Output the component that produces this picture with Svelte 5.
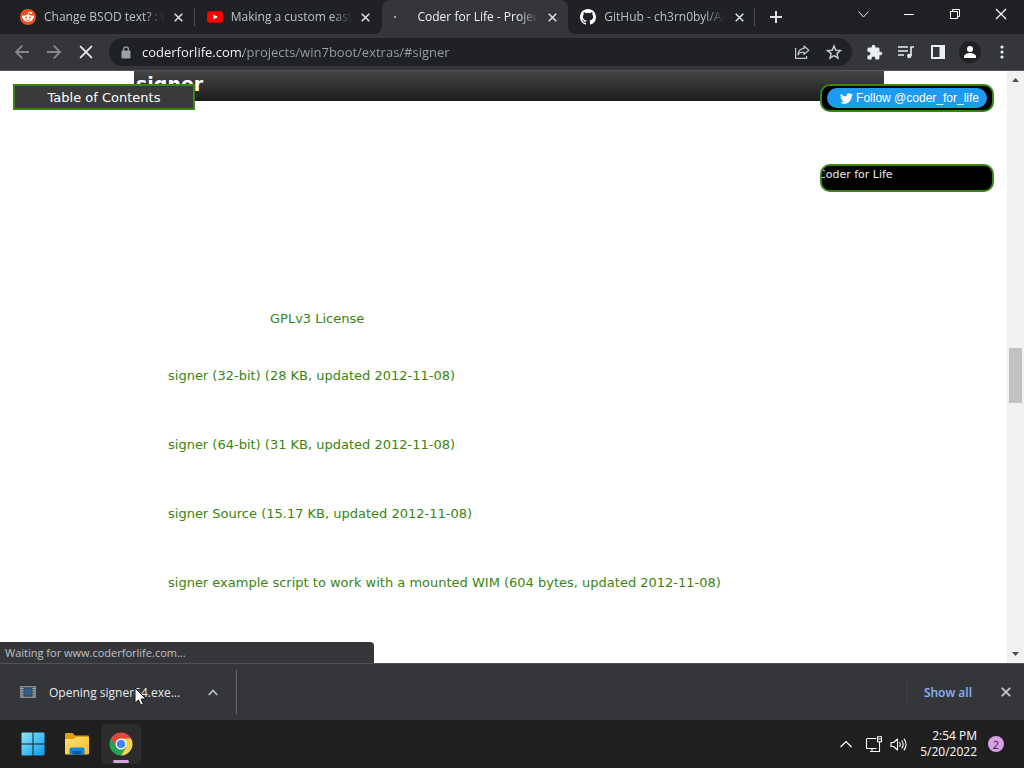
<script>
  const tabs = [
    { title: 'Change BSOD text? : wi', icon: 'reddit' },
    { title: 'Making a custom easter', icon: 'youtube' },
    { title: 'Coder for Life - Projects', icon: 'loading', active: true },
    { title: 'GitHub - ch3rn0byl/Ang', icon: 'github' },
  ];
  const downloads = [
    'signer (32-bit) (28 KB, updated 2012-11-08)',
    'signer (64-bit) (31 KB, updated 2012-11-08)',
    'signer Source (15.17 KB, updated 2012-11-08)',
    'signer example script to work with a mounted WIM (604 bytes, updated 2012-11-08)',
  ];
</script>

{#snippet cross(size, weight)}
  <svg width={size} height={size} viewBox="0 0 10 10" fill="none" stroke="currentColor" stroke-width={weight} aria-hidden="true">
    <path d="M.8.8l8.4 8.4M9.2.8L.8 9.2" />
  </svg>
{/snippet}

<div class="desktop">
  <header class="tabstrip">
    <div class="tabs">
      {#each tabs as tab}
        <div class="tab" class:active={tab.active}>
          <span class="favicon">
            {#if tab.icon === 'reddit'}
              <svg width="16" height="16" viewBox="0 0 16 16">
                <circle cx="8" cy="8" r="8" fill="#f4501c" />
                <path d="M8 6.3l.8-3 2.2.5" fill="none" stroke="#fff" stroke-width=".9" />
                <circle cx="11.3" cy="3.9" r="1" fill="#fff" />
                <circle cx="3.3" cy="7.9" r="1.4" fill="#fff" />
                <circle cx="12.7" cy="7.9" r="1.4" fill="#fff" />
                <ellipse cx="8" cy="9.3" rx="4.9" ry="3.6" fill="#fff" />
                <circle cx="6.1" cy="8.6" r="1" fill="#f4501c" />
                <circle cx="9.9" cy="8.6" r="1" fill="#f4501c" />
                <path d="M6 10.8q2 1.3 4 0" fill="none" stroke="#f4501c" stroke-width=".8" />
              </svg>
            {:else if tab.icon === 'youtube'}
              <svg width="16" height="16" viewBox="0 0 16 16">
                <rect y="2.2" width="16" height="11.6" rx="3" fill="#f00" />
                <path d="M6.4 5.4v5.2L10.9 8z" fill="#fff" />
              </svg>
            {:else if tab.icon === 'github'}
              <svg width="16" height="16" viewBox="0 0 16 16" fill="#fff">
                <path d="M8 0C3.58 0 0 3.58 0 8c0 3.54 2.29 6.53 5.47 7.59.4.07.55-.17.55-.38 0-.19-.01-.82-.01-1.49-2.01.37-2.53-.49-2.69-.94-.09-.23-.48-.94-.82-1.13-.28-.15-.68-.52-.01-.53.63-.01 1.08.58 1.23.82.72 1.21 1.87.87 2.33.66.07-.52.28-.87.51-1.07-1.78-.2-3.64-.89-3.64-3.95 0-.87.31-1.59.82-2.15-.08-.2-.36-1.02.08-2.12 0 0 .67-.21 2.2.82a7.6 7.6 0 014 0c1.53-1.04 2.2-.82 2.2-.82.44 1.1.16 1.92.08 2.12.51.56.82 1.27.82 2.15 0 3.07-1.87 3.75-3.65 3.95.29.25.54.73.54 1.48 0 1.07-.01 1.93-.01 2.2 0 .21.15.46.55.38A8.01 8.01 0 0016 8c0-4.42-3.58-8-8-8z" />
              </svg>
            {:else}
              <svg width="16" height="16" viewBox="0 0 16 16"><circle cx="1" cy="8" r="1" fill="#c8cacd" /></svg>
            {/if}
          </span>
          <button class="title">{tab.title}</button>
          <button class="close" aria-label="Close tab">{@render cross(9, 1.7)}</button>
        </div>
      {/each}
    </div>
    <button class="newtab" aria-label="New tab">
      <svg width="12" height="12" viewBox="0 0 12 12" stroke="#dcdee1" stroke-width="2"><path d="M6 0v12M0 6h12" /></svg>
    </button>
    <div class="windowbuttons">
      <button aria-label="Search tabs">
        <svg width="11" height="11" viewBox="0 0 11 11" fill="none" stroke="#e8e8e8"><path d="M.5 2.5l5 5.5 5-5.5" /></svg>
      </button>
      <button aria-label="Minimize">
        <svg width="10" height="10" viewBox="0 0 10 10" stroke="#fff"><path d="M0 5.5h10" /></svg>
      </button>
      <button aria-label="Restore">
        <svg width="10" height="10" viewBox="0 0 10 10" fill="none" stroke="#fff"><path d="M.5 2.5h7v7h-7zM2.5 2.5v-2h7v7h-2" /></svg>
      </button>
      <button aria-label="Close window">{@render cross(12, 1)}</button>
    </div>
  </header>

  <nav class="toolbar">
    <div class="navbuttons">
      <button aria-label="Back" class="dim">
        <svg width="16" height="16" viewBox="0 0 16 16" fill="none" stroke="currentColor" stroke-width="1.8"><path d="M15 8H2M8.2 1.7L2 8l6.2 6.3" /></svg>
      </button>
      <button aria-label="Forward" class="dim">
        <svg width="16" height="16" viewBox="0 0 16 16" fill="none" stroke="currentColor" stroke-width="1.8"><path d="M1 8h13M7.8 1.7L14 8l-6.2 6.3" /></svg>
      </button>
      <button aria-label="Stop">{@render cross(14, 1.3)}</button>
    </div>
    <form class="omnibox">
      <svg class="lock" width="10" height="13" viewBox="0 0 10 13" aria-hidden="true">
        <rect x=".5" y="4.5" width="9" height="8" rx="1" fill="#9aa0a6" />
        <path d="M2.6 5V3.3a2.4 2.4 0 014.8 0V5" fill="none" stroke="#9aa0a6" stroke-width="1.3" />
      </svg>
      <input aria-label="Address" value="coderforlife.com/projects/win7boot/extras/#signer" spellcheck="false" />
      <button type="button" aria-label="Share">
        <svg width="16" height="16" viewBox="0 0 16 16" fill="none" stroke="#c6c9cc" stroke-width="1.2">
          <path d="M1.6 4v10.4h11V12" />
          <path d="M10 2l4.800 4.200L10 10.400V8C7.200 8 5.300 8.800 4 11c.3-3.900 2.300-6.200 6-6.600z" stroke-linejoin="round" />
        </svg>
      </button>
      <button type="button" aria-label="Bookmark">
        <svg width="16" height="16" viewBox="0 0 16 16" fill="none" stroke="#c6c9cc" stroke-width="1.5"><path d="M8 2l1.800 4.200 4.600.4-3.500 3 1.100 4.500L8 11.700l-4 2.400 1.100-4.500-3.500-3 4.600-.4z" /></svg>
      </button>
    </form>
    <div class="actions">
      <button aria-label="Extensions">
        <svg width="17" height="17" viewBox="0 0 24 24" fill="#eceff1"><path d="M20.500 11H19V7a2 2 0 00-2-2h-4V3.500a2.500 2.500 0 00-5 0V5H4a2 2 0 00-2 2v3.800h1.500a2.700 2.700 0 010 5.400H2V20a2 2 0 002 2h3.800v-1.500a2.700 2.700 0 015.400 0V22H17a2 2 0 002-2v-4h1.500a2.500 2.500 0 000-5z" /></svg>
      </button>
      <button aria-label="Media controls">
        <svg width="18" height="16" viewBox="0 0 18 16" fill="none" stroke="#eceff1" stroke-width="1.600"><path d="M1 3h10M1 7h10M1 11h6M17 3h-3v9" /><circle cx="12.200" cy="12" r="2.200" fill="#eceff1" stroke="none" /></svg>
      </button>
      <button aria-label="Side panel">
        <svg width="14" height="14" viewBox="0 0 14 14"><path d="M1 1h12v12H1z" fill="none" stroke="#eceff1" stroke-width="2" /><path d="M8.500 1H13v12H8.500z" fill="#eceff1" /></svg>
      </button>
      <button aria-label="Profile">
        <svg width="22" height="22" viewBox="0 0 22 22"><circle cx="11" cy="11" r="11" fill="#202124" /><circle cx="11" cy="8" r="3" fill="#fff" /><path d="M5 17v-1.500c0-2.300 3.500-3.500 6-3.500s6 1.200 6 3.500V17z" fill="#fff" /></svg>
      </button>
      <button aria-label="Menu">
        <svg width="4" height="14" viewBox="0 0 4 14" fill="#eceff1"><circle cx="2" cy="2" r="1.600" /><circle cx="2" cy="7" r="1.600" /><circle cx="2" cy="12" r="1.600" /></svg>
      </button>
    </div>
  </nav>

  <main class="viewport">
    <div class="page">
      <h2>signer</h2>
      <a class="license" href="#license">GPLv3 License</a>
      <ul>
        {#each downloads as item}
          <li><a href="#signer">{item}</a></li>
        {/each}
      </ul>
      <a class="toc" href="#contents">Table of Contents</a>
      <aside class="side">
        <div class="pill follow">
          <a href="#follow">
            <svg width="13" height="13" viewBox="0 0 24 24" fill="#fff" aria-hidden="true"><path d="M23.950 4.570a10 10 0 01-2.820.770 4.960 4.960 0 002.160-2.720c-.950.550-2 .950-3.130 1.180a4.920 4.920 0 00-8.380 4.480C7.690 8.090 4.070 6.130 1.640 3.160a4.820 4.820 0 00-.67 2.480c0 1.710.87 3.210 2.190 4.100a4.900 4.900 0 01-2.230-.62v.06a4.920 4.920 0 003.950 4.830 5 5 0 01-2.210.08 4.940 4.940 0 004.600 3.420A9.870 9.870 0 010 19.540a13.990 13.990 0 007.550 2.210c9.050 0 14-7.500 14-13.980 0-.210 0-.420-.020-.630a9.940 9.940 0 002.420-2.570z" /></svg>
            Follow @coder_for_life
          </a>
        </div>
        <div class="pill like"><span>Coder for Life</span></div>
      </aside>
      <div class="status">Waiting for www.coderforlife.com...</div>
    </div>
    <div class="scrollbar" aria-hidden="true">
      <svg width="7" height="4" viewBox="0 0 7 4" fill="#505050"><path d="M0 4l3.500-4L7 4z" /></svg>
      <div class="track"><div class="thumb"></div></div>
      <svg width="7" height="4" viewBox="0 0 7 4" fill="#505050"><path d="M0 0l3.500 4L7 0z" /></svg>
    </div>
  </main>

  <section class="shelf" aria-label="Downloads">
    <button class="download">
      <svg width="16" height="12" viewBox="0 0 16 12" aria-hidden="true">
        <rect x=".5" y=".5" width="15" height="11" fill="#626970" stroke="#858b90" />
        <path d="M1 2.500h3M1 5h3M1 7.500h3M1 10h3M12 2.500h3M12 5h3M12 7.500h3M12 10h3" stroke="#a3aaaf" />
        <rect x="4" y="2" width="8" height="8" fill="#2d5f8b" stroke="#354653" />
      </svg>
      <span>Opening signer64.exe...</span>
    </button>
    <button class="options" aria-label="Download options">
      <svg width="10" height="7" viewBox="0 0 10 7" fill="none" stroke="#bdc1c6" stroke-width="1.800"><path d="M.7 6L5 1.500 9.300 6" /></svg>
    </button>
    <span class="divider"></span>
    <button class="showall">Show all</button>
    <button class="dismiss" aria-label="Close downloads">{@render cross(10, 1.700)}</button>
  </section>

  <footer class="taskbar">
    <div class="apps">
      <button aria-label="Start">
        <svg width="24" height="24" viewBox="0 0 24 24">
          <defs><linearGradient id="win" x2="1" y2="1"><stop stop-color="#8ae4ff" /><stop offset="1" stop-color="#079ce9" /></linearGradient></defs>
          <path d="M1.500.5h10v11h-11v-10q0-1 1-1zM12.500.5h10q1 0 1 1v10h-11zM.5 12.500h11v11h-10q-1 0-1-1zM12.500 12.500h11v10q0 1-1 1h-10z" fill="url(#win)" />
        </svg>
      </button>
      <button aria-label="File Explorer">
        <svg width="26" height="24" viewBox="0 0 26 24">
          <defs><linearGradient id="fold" x2="1" y2="1"><stop stop-color="#ffe17a" /><stop offset="1" stop-color="#f8bd20" /></linearGradient></defs>
          <path d="M1 2q0-1 1-1h6.500l2.500 2.500H24q1 0 1 1V10H1z" fill="#dc9e12" />
          <path d="M1 7h9l2.500-2H24q1 0 1 1v15.500q0 1-1 1H2q-1 0-1-1z" fill="url(#fold)" />
          <path d="M5.500 22.500V17q0-1.500 1.500-1.500h12q1.500 0 1.500 1.500v5.500z" fill="#1685d6" />
          <path d="M8.500 22.500V20q0-1 1-1h7q1 0 1 1v2.500z" fill="#0b5ba7" />
        </svg>
      </button>
      <button class="running" aria-label="Google Chrome">
        <svg width="24" height="24" viewBox="0 0 24 24">
          <path d="M12 12L2.040 6.250A11.500 11.500 0 0012 23.500l5-8.600z" fill="#23a455" />
          <path d="M12 6.250h9.960A11.500 11.500 0 0112 23.500l5-8.600z" fill="#fcd04b" />
          <path d="M2.040 6.250L7 14.900 12 6.250h9.960A11.500 11.500 0 002.040 6.250z" fill="#e0473f" />
          <circle cx="12" cy="12" r="5.500" fill="#fff" />
          <circle cx="12" cy="12" r="4.300" fill="#4285f4" />
        </svg>
      </button>
    </div>
    <div class="tray">
      <button aria-label="Hidden icons">
        <svg width="12" height="8" viewBox="0 0 12 8" fill="none" stroke="#fff" stroke-width="1.200"><path d="M.5 7L6 1.500 11.500 7" /></svg>
      </button>
      <button aria-label="Network">
        <svg width="18" height="17" viewBox="0 0 18 17" fill="none" stroke="#fff" stroke-width="1.100"><path d="M11 2.500H2.500q-1 0-1 1v8q0 1 1 1h9M5 15.500h7M7 12.500v3M12.500.7h4v5h-4zM12.500 3h4M14.500 6v9.500h-2.500" /></svg>
      </button>
      <button aria-label="Volume">
        <svg width="17" height="15" viewBox="0 0 17 15" fill="none" stroke="#fff" stroke-width="1.100"><path d="M1 5.500h2.500L7.500 2v11L3.500 9.500H1zM9.500 5.300q1.500 2.200 0 4.400M11.700 3.500q3 4 0 8M13.900 1.700q4.300 5.800 0 11.600" stroke-linejoin="round" /></svg>
      </button>
      <button class="clock"><span>2:54 PM</span><span>5/20/2022</span></button>
      <button class="badge" aria-label="2 notifications">2</button>
    </div>
  </footer>

  <svg class="cursor" width="13" height="20" viewBox="0 0 13 20" aria-hidden="true">
    <path d="M1 1v15.200l3.500-3.300 2.300 5.400 2.600-1.100-2.300-5.200H12z" fill="#fff" stroke="#111" stroke-width="1" />
  </svg>
</div>

<style>
  :global(body) { margin: 0; }
  .desktop {
    position: relative;
    display: flex;
    flex-direction: column;
    height: 100vh;
    overflow: hidden;
    font: 12px "Open Sans", "Noto Sans", sans-serif;
    color: #e8eaed;
  }
  button {
    display: flex;
    align-items: center;
    justify-content: center;
    padding: 0;
    border: 0;
    background: none;
    color: inherit;
    font: inherit;
  }
  svg { flex: none; display: block; }
  a { text-decoration: none; }

  .tabstrip { display: flex; height: 34px; background: #202124; }
  .tabs { display: flex; flex: 0 1 747px; min-width: 0; padding-left: 8px; }
  .tab {
    position: relative;
    display: flex;
    flex: 1 1 0;
    min-width: 0;
    align-items: center;
    gap: 8px;
    padding: 0 10px 0 12px;
    color: #bdc1c6;
  }
  .tab::after {
    content: "";
    position: absolute;
    right: 0;
    top: 8px;
    width: 1px;
    height: 18px;
    background: #4b4c50;
  }
  .tab:has(+ .active)::after { display: none; }
  .tab.active { background: #35363a; color: #f1f3f4; border-radius: 8px 8px 0 0; }
  .tab.active::before, .tab.active::after {
    content: "";
    position: absolute;
    top: auto;
    bottom: 0;
    width: 8px;
    height: 8px;
  }
  .tab.active::before { left: -8px; background: radial-gradient(circle at 0 0, transparent 8px, #35363a 8px); }
  .tab.active::after { right: -8px; background: radial-gradient(circle at 100% 0, transparent 8px, #35363a 8px); }
  .title {
    flex: 1;
    min-width: 0;
    height: 16px;
    line-height: 16px;
    justify-content: flex-start;
    overflow: hidden;
    white-space: nowrap;
    mask-image: linear-gradient(to right, #000 calc(100% - 20px), transparent);
  }
  .close { width: 12px; color: #dfe1e5; }
  .newtab { width: 42px; }
  .windowbuttons { display: flex; margin-left: auto; height: 28px; }
  .windowbuttons button { width: 46px; color: #fff; }

  .toolbar {
    display: flex;
    align-items: center;
    height: 36px;
    background: #35363a;
    border-bottom: 1px solid #55565a;
  }
  .navbuttons, .actions { display: flex; }
  .navbuttons { padding: 0 7px 0 6px; }
  .navbuttons button, .actions button { width: 32px; height: 28px; }
  .actions { padding: 0 6px; }
  .dim { color: #85878a; }
  .omnibox {
    display: flex;
    flex: 1;
    min-width: 0;
    align-items: center;
    height: 28px;
    padding: 0 2px 0 12px;
    border-radius: 14px;
    background: #202124;
  }
  .omnibox input {
    flex: 1;
    min-width: 0;
    margin-left: 11px;
    padding: 0;
    border: 0;
    outline: 0;
    font: 13px "Open Sans", "Noto Sans", sans-serif;
    color: transparent;
    background: linear-gradient(to right, #fff 101px, #9aa0a6 101px);
    background-clip: text;
  }
  .omnibox button { width: 32px; height: 28px; }

  .viewport { display: flex; flex: 1; min-height: 0; background: #fff; }
  .page {
    position: relative;
    flex: 1;
    min-width: 0;
    overflow: hidden;
    font: 13px/18px "DejaVu Sans", sans-serif;
  }
  h2 {
    max-width: 748px;
    height: 30px;
    margin: 0 123px 0 134px;
    padding-left: 2px;
    font: bold 19px/26px "DejaVu Sans", sans-serif;
    color: #fff;
    background: linear-gradient(#454545, #1c1c1c);
  }
  .page a { color: #39850f; }
  .license { display: block; margin: 209px 0 0 270px; }
  ul { margin: 39px 0 0; padding: 0 0 0 168px; list-style: none; }
  li { margin-bottom: 51px; }
  .page .toc {
    position: absolute;
    top: 13px;
    left: 13px;
    width: 178px;
    height: 22px;
    border: 2px solid #388511;
    background: #3a3a3a;
    color: #fff;
    line-height: 24px;
    text-align: center;
  }
  .side {
    position: absolute;
    top: 13px;
    right: 13px;
    display: flex;
    flex-direction: column;
    gap: 52px;
    width: 174px;
  }
  .pill {
    box-sizing: border-box;
    height: 28px;
    border: 2px solid #388511;
    border-radius: 10px;
    background: #000;
  }
  .follow { padding: 2px 5px; }
  .page .follow a {
    display: flex;
    align-items: center;
    justify-content: flex-end;
    gap: 3px;
    height: 20px;
    padding-right: 8px;
    border-radius: 10px;
    background: #1d9bf0;
    color: #fff;
    font: 12px "Liberation Sans", sans-serif;
    white-space: nowrap;
  }
  .like { overflow: hidden; font: 11px/18px "DejaVu Sans", sans-serif; }
  .like span { margin-left: -4px; }
  .status {
    position: absolute;
    left: 0;
    bottom: 0;
    box-sizing: border-box;
    width: 374px;
    padding-left: 5px;
    border-radius: 0 4px 0 0;
    background: #35363a;
    color: #bdc1c6;
    font: 11px/21px "Open Sans", "Noto Sans", sans-serif;
  }
  .scrollbar {
    display: flex;
    flex-direction: column;
    align-items: center;
    width: 17px;
    padding: 7px 0;
    box-sizing: border-box;
    background: #f1f1f1;
  }
  .track { flex: 1; width: 13px; }
  .thumb { height: 55px; margin-top: 266px; background: #c1c1c1; }

  .shelf {
    display: flex;
    align-items: center;
    height: 56px;
    border-top: 1px solid #515256;
    background: #35363a;
  }
  .download { gap: 13px; padding-left: 20px; white-space: nowrap; }
  .options { width: 30px; height: 30px; margin: 0 8px 0 18px; }
  .divider { width: 1px; height: 44px; background: #66686b; }
  .showall {
    height: 28px;
    margin-left: auto;
    padding: 0 16px;
    border-left: 1px solid #404146;
    color: #8ab4f8;
    font-size: 12px;
    font-weight: 600;
  }
  .dismiss { width: 36px; height: 28px; color: #c8cacd; }

  .taskbar {
    display: flex;
    align-items: center;
    justify-content: space-between;
    height: 48px;
    background: #1f1f1f;
  }
  .apps { display: flex; gap: 4px; padding-left: 13px; }
  .apps button { position: relative; width: 40px; height: 40px; border-radius: 4px; }
  .apps .running { background: #2c2c2c; }
  .running::after {
    content: "";
    position: absolute;
    bottom: 1px;
    left: 12px;
    width: 16px;
    height: 3px;
    border-radius: 2px;
    background: #d4a5dc;
  }
  .tray { display: flex; align-items: center; padding-right: 20px; }
  .tray button { width: 24px; height: 40px; }
  .tray button:first-child { width: 32px; }
  .tray .clock {
    flex-direction: column;
    align-items: flex-end;
    width: auto;
    margin: 0 11px 0 10px;
    color: #fff;
    font-size: 12px;
    line-height: 16px;
  }
  .tray .badge {
    width: 16px;
    height: 16px;
    border-radius: 8px;
    background: #d9a0e3;
    color: #2b1a2e;
    font-size: 11px;
  }
  .cursor { position: absolute; left: 134px; top: 687px; }
</style>
